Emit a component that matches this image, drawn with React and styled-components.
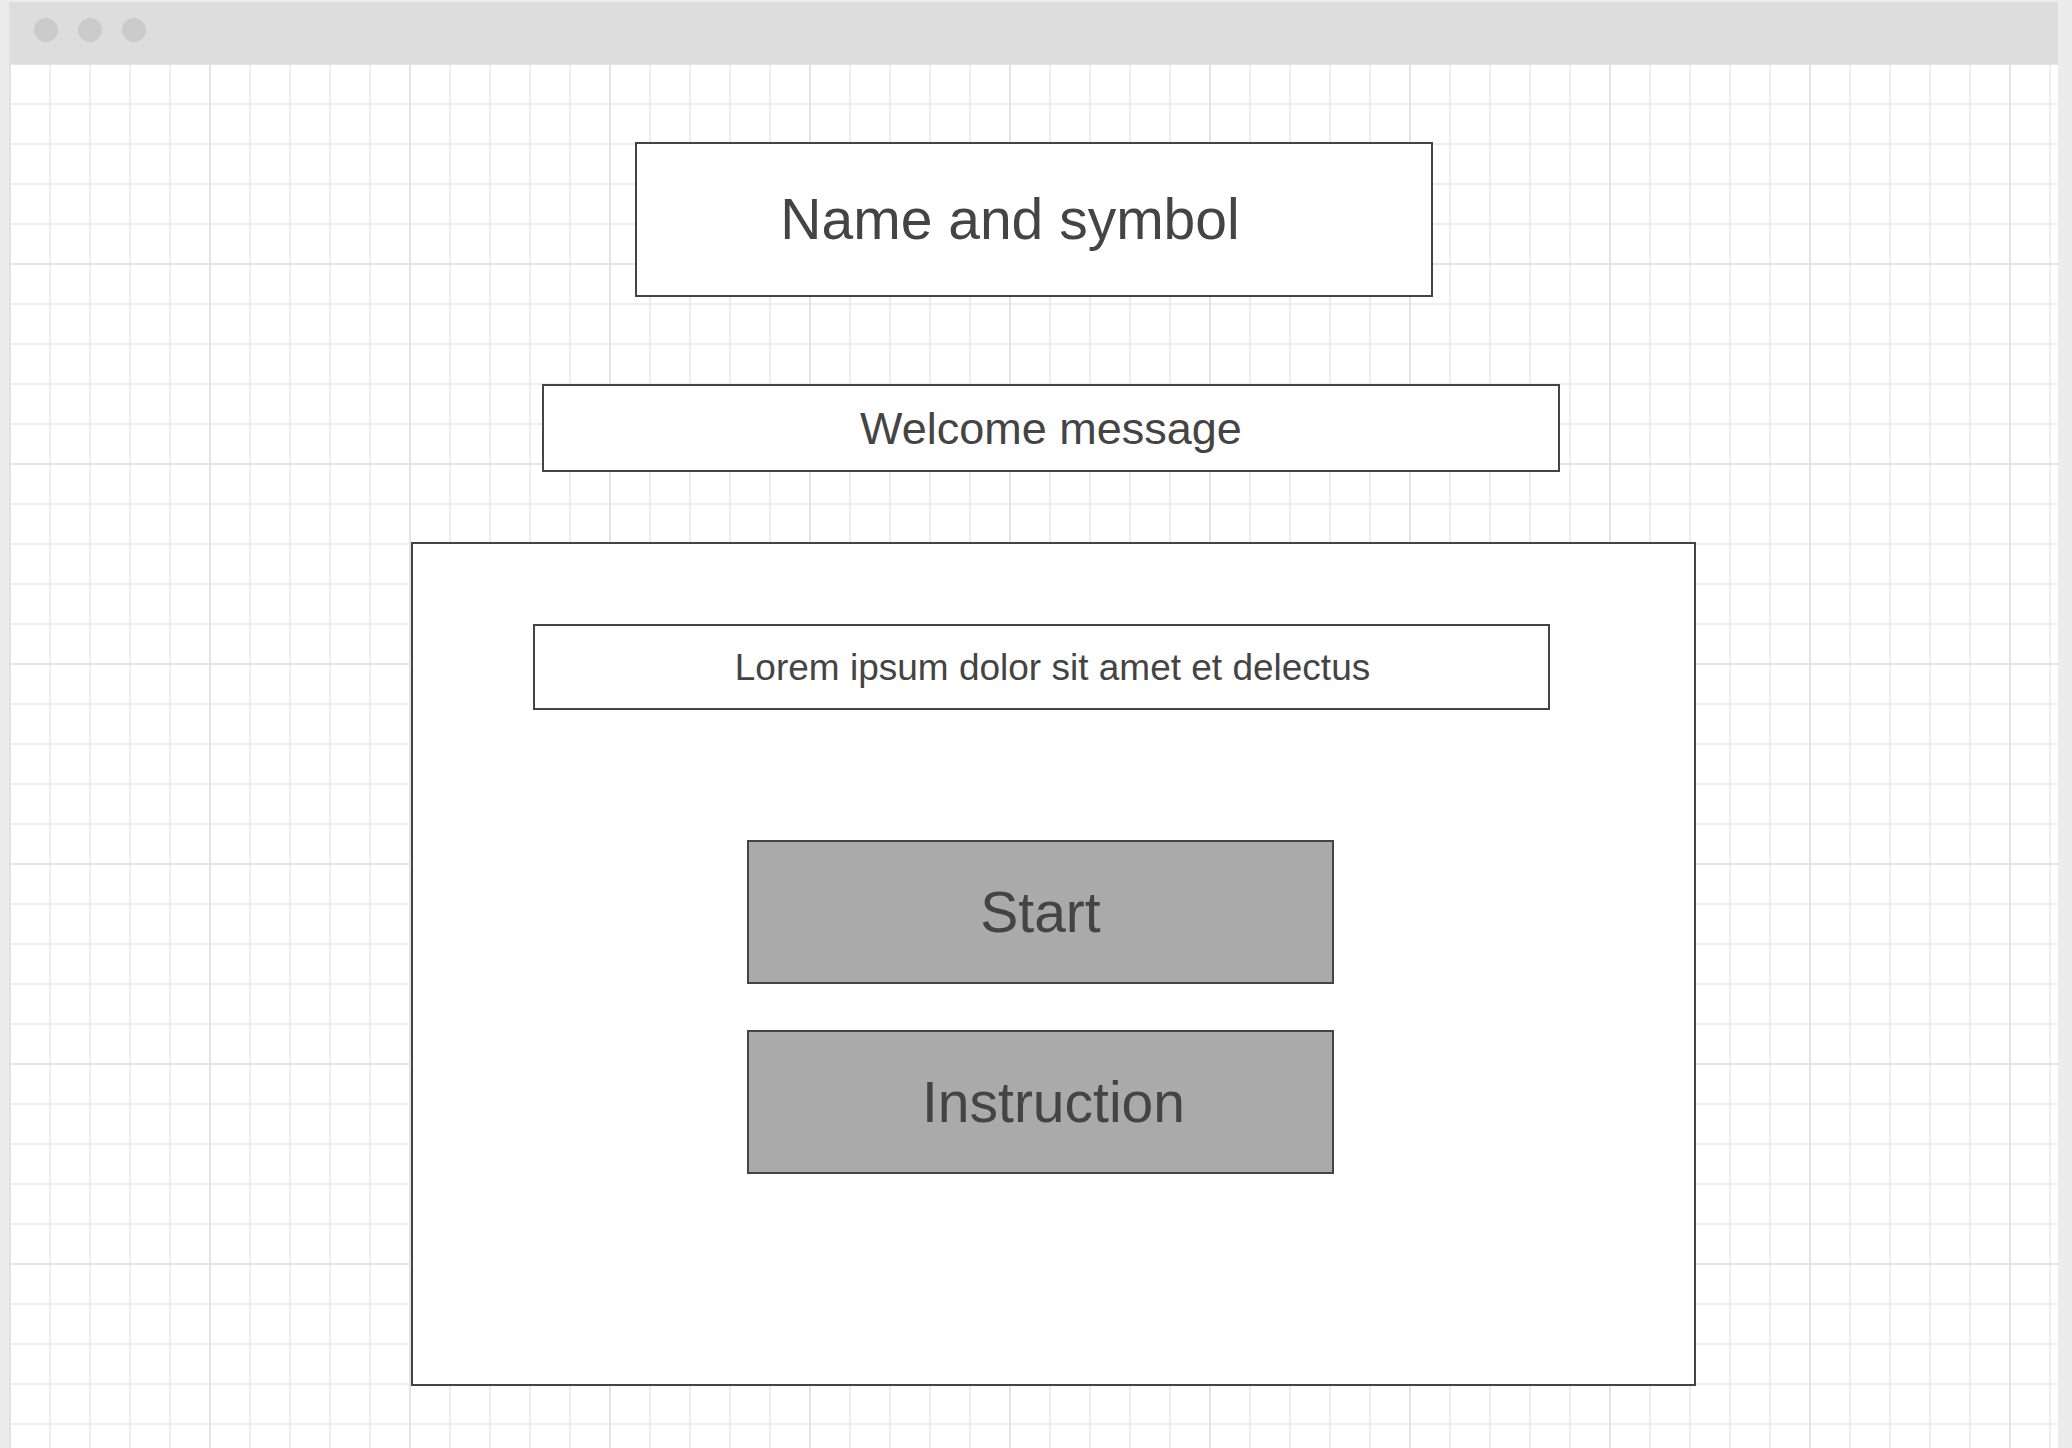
import React from 'react';
import styled, { createGlobalStyle } from 'styled-components';

const GlobalStyle = createGlobalStyle`
  * {
    box-sizing: border-box;
  }
  html, body {
    margin: 0;
    padding: 0;
    background: #ececec;
    font-family: "Liberation Sans", Arial, sans-serif;
  }
`;

const Window = styled.div`
  margin: 2px 14px 0 9px;
  border-left: 1px solid #e0e0e0;
  display: flex;
  flex-direction: column;
  background: #ffffff;
`;

const TitleBar = styled.div`
  height: 62px;
  background: #dddddd;
  display: flex;
  align-items: center;
  gap: 20px;
  padding: 0 0 6px 24px;
`;

const Dot = styled.span`
  width: 24px;
  height: 24px;
  border-radius: 50%;
  background: #cbcbcb;
`;

const Canvas = styled.div`
  height: 1384px;
  display: flex;
  flex-direction: column;
  align-items: flex-start;
  background-color: #ffffff;
  background-image:
    linear-gradient(to right, #e4e4e4 2px, transparent 2px),
    linear-gradient(to bottom, #e4e4e4 2px, transparent 2px),
    linear-gradient(to right, #eeeeee 2px, transparent 2px),
    linear-gradient(to bottom, #eeeeee 2px, transparent 2px);
  background-size: 200px 200px, 200px 200px, 40px 40px, 40px 40px;
  background-position: -1px -1px;
`;

const Box = styled.div`
  width: ${(p) => p.$w}px;
  height: ${(p) => p.$h}px;
  margin-top: ${(p) => p.$top}px;
  margin-left: ${(p) => p.$left}px;
  border: 2px solid #444444;
  background: ${(p) => (p.$fill ? '#aaaaaa' : '#ffffff')};
  display: flex;
  align-items: center;
  justify-content: center;
  padding-left: ${(p) => Math.max(0, p.$shift || 0) * 2}px;
  padding-right: ${(p) => Math.max(0, -(p.$shift || 0)) * 2}px;
  color: #444444;
  font-size: ${(p) => p.$size}px;
  line-height: 1;
  white-space: nowrap;
  flex-shrink: 0;
`;

const Panel = styled.div`
  width: 1285px;
  height: 844px;
  margin-top: 70px;
  margin-left: 401px;
  border: 2px solid #444444;
  background: #ffffff;
  display: flex;
  flex-direction: column;
  align-items: flex-start;
  flex-shrink: 0;
`;

export default function App() {
  return (
    <>
      <GlobalStyle />
      <Window>
        <TitleBar>
          <Dot />
          <Dot />
          <Dot />
        </TitleBar>
        <Canvas>
          <Box $w={798} $h={155} $top={78} $left={625} $size={57} $shift={-24}>
            Name and symbol
          </Box>
          <Box $w={1018} $h={88} $top={87} $left={532} $size={45}>
            Welcome message
          </Box>
          <Panel>
            <Box $w={1017} $h={86} $top={80} $left={120} $size={37} $shift={11}>
              Lorem ipsum dolor sit amet et delectus
            </Box>
            <Box $w={587} $h={144} $top={130} $left={334} $size={57} $fill>
              Start
            </Box>
            <Box $w={587} $h={144} $top={46} $left={334} $size={57} $shift={13} $fill>
              Instruction
            </Box>
          </Panel>
        </Canvas>
      </Window>
    </>
  );
}
